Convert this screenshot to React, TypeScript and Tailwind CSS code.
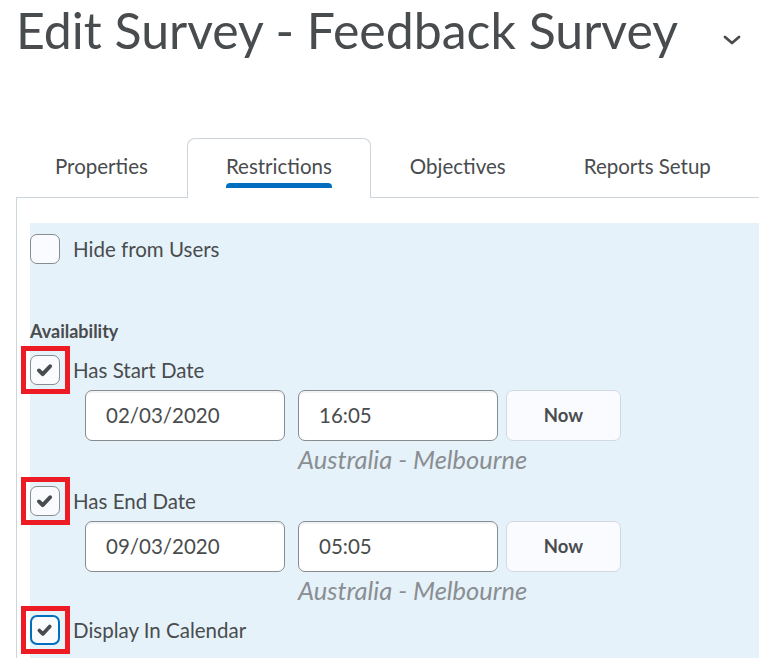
import { ReactNode } from "react";

const font = { fontFamily: "Lato, 'Noto Sans', sans-serif" };

function Check() {
  return (
    <svg width="30" height="30" viewBox="0 0 30 30" className="block">
      <path
        d="M8.5 15.5 L12.5 19.5 L20.5 11"
        fill="none"
        stroke="#494c4e"
        strokeWidth="4.2"
        strokeLinecap="round"
        strokeLinejoin="round"
      />
    </svg>
  );
}

function Checkbox({
  checked,
  focused,
  marked,
}: {
  checked?: boolean;
  focused?: boolean;
  marked?: boolean;
}) {
  return (
    <div className="relative h-[30px] w-[30px] shrink-0">
      <div
        className={
          focused
            ? "h-full w-full rounded-[7px] border-2 border-[#006fbf] bg-[#f9fbff] flex items-center justify-center"
            : "h-full w-full rounded-[7px] border border-[#868c8f] bg-[#f9fbff] flex items-center justify-center"
        }
      >
        {checked && <Check />}
      </div>
      {marked && (
        <div className="absolute -left-[9px] -top-[9px] h-[48px] w-[49px] border-[5px] border-[#ed1c24]" />
      )}
    </div>
  );
}

function CheckRow({ children, ...rest }: { children: ReactNode; checked?: boolean; focused?: boolean; marked?: boolean }) {
  return (
    <div className="flex items-center gap-[13px]">
      <Checkbox {...rest} />
      <span className="whitespace-nowrap text-[20.5px] leading-[24px] text-[#494c4e]">{children}</span>
    </div>
  );
}

function DateRow({ date, time }: { date: string; time: string }) {
  return (
    <>
      <div className="ml-[55px] mt-[5px] flex items-center">
        <div className="flex h-[51px] w-[200px] items-center rounded-[7px] border border-[#868c8f] bg-white pl-[20px] text-[20.5px] text-[#494c4e] shadow-[inset_0_2px_0_#f1f3f5]">
          {date}
        </div>
        <div className="ml-[13px] flex h-[51px] w-[200px] items-center rounded-[7px] border border-[#868c8f] bg-white pl-[20px] text-[20.5px] text-[#494c4e] shadow-[inset_0_2px_0_#f1f3f5]">
          {time}
        </div>
        <button className="ml-[8px] h-[51px] w-[115px] rounded-[7px] border border-[#d3d9e3] bg-[#f9fbff] text-[18.5px] font-bold text-[#494c4e]">
          Now
        </button>
      </div>
      <div className="ml-[268px] mt-[5px] whitespace-nowrap text-[25.5px] italic leading-[26px] text-[#8a8e92]">
        Australia - Melbourne
      </div>
    </>
  );
}

const tabs = ["Properties", "Restrictions", "Objectives", "Reports Setup"];

export default function App() {
  return (
    <div className="min-h-[658px] overflow-hidden bg-white" style={font}>
      <div className="flex items-center pl-[16px]">
        <h1 className="whitespace-nowrap text-[50px] font-normal leading-[60px] text-[#494c4e]">
          Edit Survey - Feedback Survey
        </h1>
        <svg width="18" height="10" viewBox="0 0 18 10" className="ml-[45px] mt-[20px] shrink-0">
          <path d="M2 2 L9 8 L16 2" fill="none" stroke="#494c4e" strokeWidth="2.8" strokeLinecap="round" strokeLinejoin="round" />
        </svg>
      </div>

      <div className="relative z-10 ml-[16px] mt-[78px] flex">
        {tabs.map((t) => {
          const active = t === "Restrictions";
          return (
            <div
              key={t}
              className={
                active
                  ? "-mb-px flex flex-col items-center rounded-t-[8px] border border-b-0 border-[#cdd5dc] bg-white px-[38px] pt-[15px] pb-[10px]"
                  : "-mb-px flex flex-col items-center rounded-t-[8px] border border-b-0 border-transparent px-[38px] pt-[15px] pb-[10px]"
              }
            >
              <span className="whitespace-nowrap text-[20.5px] leading-[24px] text-[#494c4e]">{t}</span>
              <div
                className={
                  active
                    ? "mt-[5px] h-[5px] w-full rounded-t-[4px] bg-[#006fbf]"
                    : "mt-[5px] h-[5px] w-full"
                }
              />
            </div>
          );
        })}
      </div>

      <div className="ml-[16px] border-l border-t border-[#cdd5dc] pl-[13px] pt-[25px]">
        <div className="bg-[#e6f2f9] pt-[11px] pb-[20px]">
          <CheckRow>Hide from Users</CheckRow>

          <div className="mt-[55px] text-[18px] font-bold leading-[24px] text-[#494c4e]">Availability</div>

          <div className="mt-[12px]">
            <CheckRow checked marked>
              Has Start Date
            </CheckRow>
          </div>
          <DateRow date="02/03/2020" time="16:05" />

          <div className="mt-[14px]">
            <CheckRow checked marked>
              Has End Date
            </CheckRow>
          </div>
          <DateRow date="09/03/2020" time="05:05" />

          <div className="mt-[12px]">
            <CheckRow checked focused marked>
              Display In Calendar
            </CheckRow>
          </div>
        </div>
      </div>
    </div>
  );
}
